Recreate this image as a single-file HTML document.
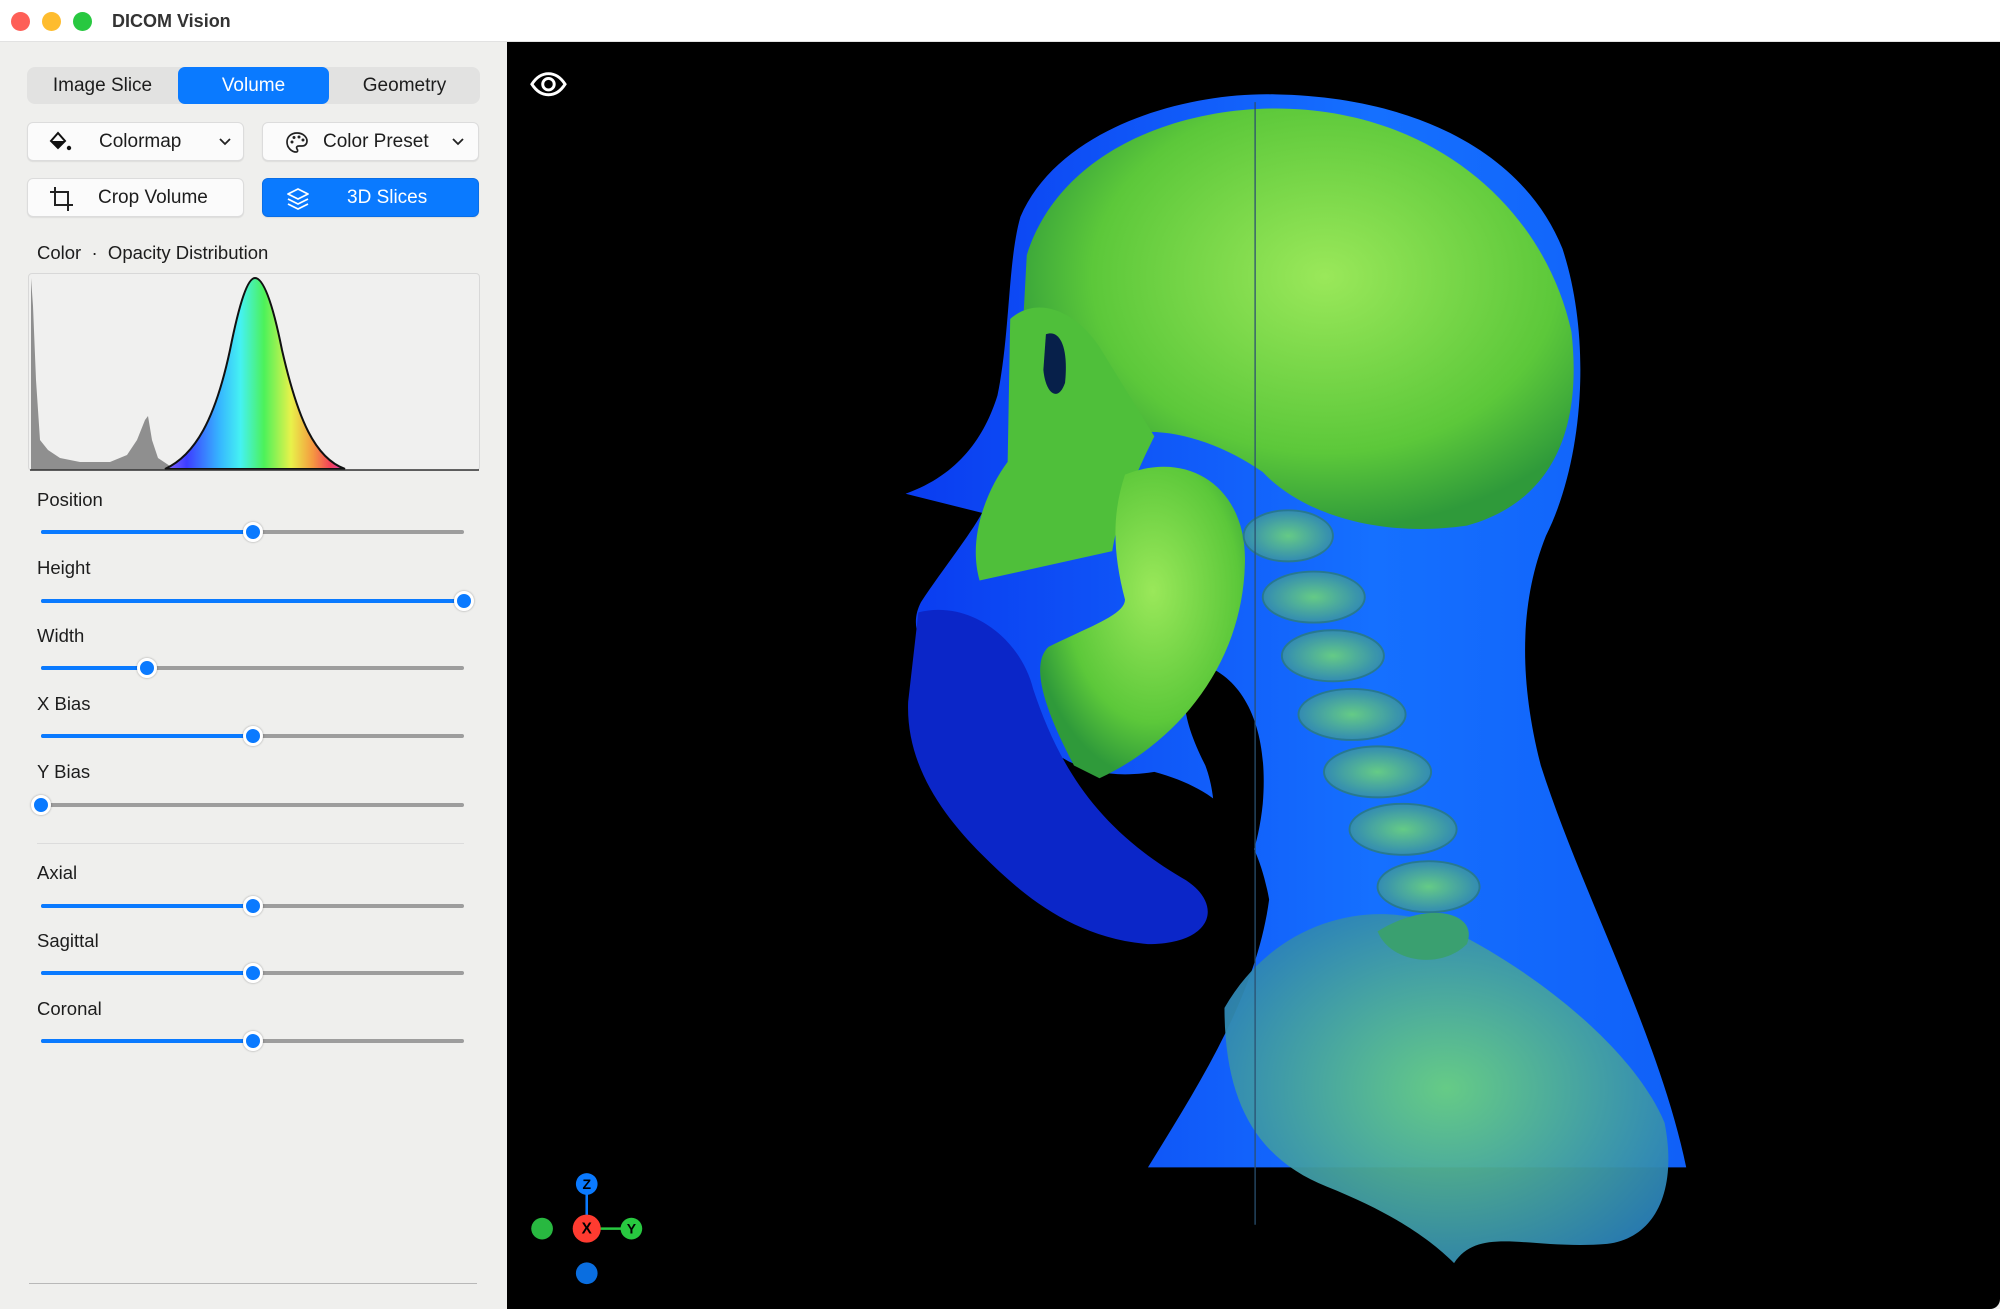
<!DOCTYPE html>
<html><head><meta charset="utf-8"><style>
*{margin:0;padding:0;box-sizing:border-box}
body{width:2000px;height:1309px;overflow:hidden;background:#efefed;font-family:"Liberation Sans",sans-serif;position:relative;color:#1d1d1d}
.abs{position:absolute}
.title{left:0;top:0;width:2000px;height:42px;background:#fff;border-bottom:1px solid #e2e2e2}
.dot{width:19px;height:19px;border-radius:50%;top:12px}
.seg{left:27px;top:67px;width:453px;height:37px;background:#e2e2e1;border-radius:8px}
.seg div{position:absolute;top:0;height:37px;width:151px;text-align:center;line-height:37px;font-size:19px}
.btn{height:39px;width:217px;background:#fbfbfb;border:1px solid #dcdcdc;border-radius:6px;box-shadow:0 1px 1px rgba(0,0,0,.08);font-size:19px;line-height:37px}
.lbl{font-size:18.5px;left:37px}
.track{left:41px;width:423px;height:4px;background:#9d9d9d;border-radius:2px}
.track i{position:absolute;left:0;top:0;height:4px;background:#0a7aff;border-radius:2px}
.track b{position:absolute;top:-8px;width:20px;height:20px;margin-left:-10px;border-radius:50%;background:#0a7aff;border:3.5px solid #fff;box-shadow:0 0 2px rgba(0,0,0,.35)}
</style></head><body>
<div class="abs title"></div>
<div class="abs dot" style="left:11px;background:#fe5f57"></div>
<div class="abs dot" style="left:42px;background:#febc2e"></div>
<div class="abs dot" style="left:73px;background:#28c840"></div>
<div class="abs" style="left:112px;top:11px;font-size:18px;font-weight:bold;color:#333">DICOM Vision</div>

<div class="abs seg"><div style="left:0">Image Slice</div><div style="left:151px;background:#0a7aff;color:#fff;border-radius:7px">Volume</div><div style="left:302px">Geometry</div></div>

<div class="abs btn" style="left:27px;top:122px">
<svg class="abs" style="left:20px;top:8px" width="26" height="22" viewBox="0 0 26 22"><path d="M10 2 L3 10 L10 17 L17 10 Z" fill="none" stroke="#111" stroke-width="2"/><path d="M4 10 L16 10 L10 16 Z" fill="#111"/><circle cx="21" cy="17" r="2.2" fill="#111"/></svg>
<span class="abs" style="left:71px">Colormap</span>
<svg class="abs" style="left:190px;top:14px" width="14" height="10"><path d="M2 2 L7 7 L12 2" fill="none" stroke="#222" stroke-width="1.8"/></svg></div>
<div class="abs btn" style="left:262px;top:122px">
<svg class="abs" style="left:22px;top:8px" width="24" height="24" viewBox="0 0 24 24"><path d="M12 2 C6 2 2 6 2 11 C2 17 7 21 11 21 C13 21 13 19 12 18 C11 16 12 15 14 15 L17 15 C20 15 22 13 22 10 C22 6 18 2 12 2 Z" fill="none" stroke="#222" stroke-width="1.7"/><circle cx="7" cy="11" r="1.5" fill="#222"/><circle cx="9" cy="6.5" r="1.5" fill="#222"/><circle cx="14" cy="6" r="1.5" fill="#222"/><circle cx="18" cy="9" r="1.5" fill="#222"/></svg>
<span class="abs" style="left:60px">Color Preset</span>
<svg class="abs" style="left:188px;top:14px" width="14" height="10"><path d="M2 2 L7 7 L12 2" fill="none" stroke="#222" stroke-width="1.8"/></svg></div>
<div class="abs btn" style="left:27px;top:178px">
<svg class="abs" style="left:21px;top:7px" width="26" height="26" viewBox="0 0 26 26"><path d="M6 1 V19 H24 M1 6 H19 V25" fill="none" stroke="#222" stroke-width="2"/></svg>
<span class="abs" style="left:70px">Crop Volume</span></div>
<div class="abs btn" style="left:262px;top:178px;background:#0a7aff;border-color:#0a6ee6;color:#fff">
<svg class="abs" style="left:23px;top:8px" width="24" height="24" viewBox="0 0 24 24"><path d="M12 2 L22 7 L12 12 L2 7 Z M2 12 L12 17 L22 12 M2 17 L12 22 L22 17" fill="none" stroke="#fff" stroke-width="1.8" stroke-linejoin="round"/></svg>
<span class="abs" style="left:84px">3D Slices</span></div>

<div class="abs lbl" style="top:242px">Color&nbsp; ·&nbsp; Opacity Distribution</div>
<div class="abs" style="left:28px;top:273px;width:452px;height:198px;border:1px solid #d8d8d8;border-radius:4px;background:#f0f0ef"></div>
<svg class="abs" style="left:0;top:0" width="500" height="480">
<defs><linearGradient id="rb" x1="165" x2="345" y1="0" y2="0" gradientUnits="userSpaceOnUse">
<stop offset="0" stop-color="#8a6bff"/><stop offset=".12" stop-color="#3d3dff"/><stop offset=".3" stop-color="#36b4ff"/><stop offset=".42" stop-color="#45f2f2"/><stop offset=".55" stop-color="#4cf25a"/><stop offset=".7" stop-color="#e8f24a"/><stop offset=".82" stop-color="#f59a40"/><stop offset=".92" stop-color="#f2405a"/><stop offset="1" stop-color="#e040c0"/></linearGradient></defs>
<path d="M31 470 L31 278 L33 306 L36 380 L40 440 L48 450 L60 458 L80 462 L110 462 L127 455 L137 440 L145 420 L148 416 L152 440 L158 458 L170 466 L180 470 Z" fill="#8f8f8f"/>
<path d="M165 469 C195 455 215 420 230 350 C240 300 248 278 255 278 C263 278 272 300 282 350 C298 420 315 458 345 469 Z" fill="url(#rb)" stroke="#111" stroke-width="2"/>
<line x1="30" y1="470" x2="479" y2="470" stroke="#333" stroke-width="1.5"/>
</svg>

<div class="abs lbl" style="top:489px">Position</div>
<div class="abs track" style="top:530px"><i style="width:212px"></i><b style="left:212px"></b></div>
<div class="abs lbl" style="top:557px">Height</div>
<div class="abs track" style="top:599px"><i style="width:423px"></i><b style="left:423px"></b></div>
<div class="abs lbl" style="top:625px">Width</div>
<div class="abs track" style="top:666px"><i style="width:106px"></i><b style="left:106px"></b></div>
<div class="abs lbl" style="top:693px">X Bias</div>
<div class="abs track" style="top:734px"><i style="width:212px"></i><b style="left:212px"></b></div>
<div class="abs lbl" style="top:761px">Y Bias</div>
<div class="abs track" style="top:803px"><b style="left:0"></b></div>
<div class="abs" style="left:37px;top:843px;width:427px;height:1px;background:#dcdcdc"></div>
<div class="abs lbl" style="top:862px">Axial</div>
<div class="abs track" style="top:904px"><i style="width:212px"></i><b style="left:212px"></b></div>
<div class="abs lbl" style="top:930px">Sagittal</div>
<div class="abs track" style="top:971px"><i style="width:212px"></i><b style="left:212px"></b></div>
<div class="abs lbl" style="top:998px">Coronal</div>
<div class="abs track" style="top:1039px"><i style="width:212px"></i><b style="left:212px"></b></div>
<div class="abs" style="left:29px;top:1283px;width:448px;height:1px;background:#b8b8b8"></div>

<div class="abs" style="left:507px;top:42px;width:1493px;height:1267px;background:#000;border-bottom-right-radius:10px"></div>
<svg class="abs" style="left:0;top:0" width="2000" height="1309" viewBox="0 0 1568 1026" preserveAspectRatio="none">
<defs>
<radialGradient id="gr" cx=".55" cy=".4" r=".6"><stop offset="0" stop-color="#9ae85a"/><stop offset=".7" stop-color="#5cc83a"/><stop offset="1" stop-color="#2f9a3a"/></radialGradient>
<radialGradient id="tl" cx=".5" cy=".5" r=".6"><stop offset="0" stop-color="#6ad080"/><stop offset="1" stop-color="#2a80b8"/></radialGradient>
<linearGradient id="bl" x1="0" x2="1"><stop offset="0" stop-color="#0a3cf0"/><stop offset=".6" stop-color="#1570ff"/><stop offset="1" stop-color="#1060f8"/></linearGradient>
</defs>
<path d="M800 170 C830 100 930 72 1000 74 C1110 76 1195 120 1225 195 C1248 265 1242 360 1212 420 C1192 470 1190 530 1208 600 C1240 700 1300 810 1322 915 L900 915 C940 850 985 780 995 705 C985 650 960 620 905 605 C860 612 830 600 800 565 C745 535 705 505 722 472 C740 445 760 420 770 402 L710 387 C752 372 772 342 782 310 C792 262 790 205 800 170 Z" fill="url(#bl)"/>
<path d="M720 480 C760 470 800 500 810 540 C830 600 860 650 930 690 C960 710 950 740 900 740 C840 735 800 700 770 670 C740 640 710 600 712 550 Z" fill="#0b26c8"/>
<path d="M940 520 C975 530 995 570 990 630 C985 680 965 710 955 700 C945 680 960 640 945 600 C930 570 920 540 940 520 Z" fill="#000"/>
<path d="M880 620 C910 615 940 625 945 640 C930 650 895 648 880 640 Z" fill="#000"/>
<path d="M805 200 C830 120 920 85 1000 85 C1120 85 1210 160 1232 260 C1240 330 1222 392 1150 412 C1080 422 1020 402 990 370 C950 342 900 330 870 345 C840 342 812 322 800 292 Z" fill="url(#gr)"/>
<path d="M792 250 C812 232 842 242 862 272 L905 342 C885 382 875 412 872 432 L768 455 C758 420 775 382 790 362 Z" fill="#4fbf3a"/>
<path d="M820 262 C830 258 838 270 835 300 C830 315 820 310 818 290 Z" fill="#07204a"/>
<path d="M882 372 C932 352 978 382 976 442 C974 522 922 582 862 610 L842 600 C822 562 806 522 822 507 C852 492 882 482 882 470 C872 432 872 402 882 372 Z" fill="url(#gr)"/>
<g fill="url(#tl)" opacity=".95" stroke="#2a7a8a" stroke-width="1.5">
<ellipse cx="1010" cy="420" rx="35" ry="20"/><ellipse cx="1030" cy="468" rx="40" ry="20"/><ellipse cx="1045" cy="514" rx="40" ry="20"/><ellipse cx="1060" cy="560" rx="42" ry="20"/><ellipse cx="1080" cy="605" rx="42" ry="20"/><ellipse cx="1100" cy="650" rx="42" ry="20"/><ellipse cx="1120" cy="695" rx="40" ry="20"/>
</g>
<path fill="url(#tl)" opacity=".95" d="M960 790 C1000 720 1080 700 1140 730 C1200 760 1280 820 1305 880 C1315 930 1300 970 1260 975 C1200 980 1160 960 1140 990 C1120 970 1090 950 1040 930 C990 910 960 870 960 790 Z"/>
<path d="M1080 730 C1120 705 1160 715 1150 740 C1130 760 1090 755 1080 730 Z" fill="#3aa070"/>
<line x1="984" y1="80" x2="984" y2="960" stroke="#2a5070" stroke-width="1"/>
<g transform="translate(430 66)" fill="none" stroke="#fff" stroke-width="2.3"><path d="M-13 0 C-6 -11 6 -11 13 0 C6 11 -6 11 -13 0 Z"/><circle r="4.5"/></g>
<line x1="460" y1="928" x2="460" y2="963" stroke="#0a7aff" stroke-width="2"/>
<line x1="460" y1="963" x2="495" y2="963" stroke="#28c840" stroke-width="2"/>
<circle cx="460" cy="928" r="8.5" fill="#0a7aff"/><circle cx="425" cy="963" r="8.5" fill="#28b840"/>
<circle cx="460" cy="963" r="11" fill="#ff3b30"/><circle cx="495" cy="963" r="8.5" fill="#28c840"/>
<circle cx="460" cy="998" r="8.5" fill="#0a6ee0"/>
<g font-family="Liberation Sans" font-size="11" font-weight="bold" text-anchor="middle" fill="#000"><text x="460" y="932">Z</text><text x="460" y="967" font-size="12">X</text><text x="495" y="967">Y</text></g>
</svg>
</body></html>
